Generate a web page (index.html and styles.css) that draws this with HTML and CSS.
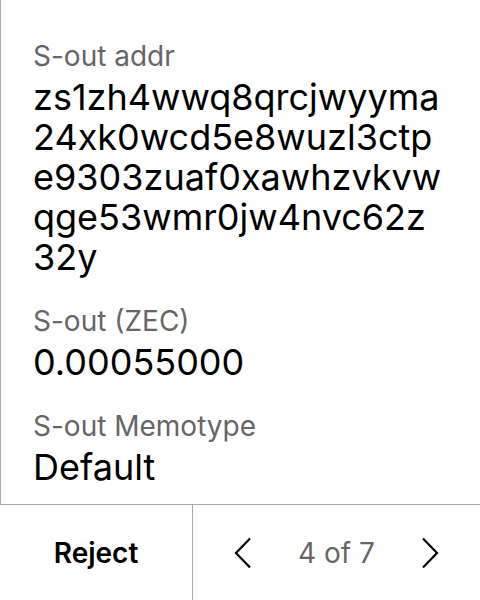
FILE: index.html
```html
<!DOCTYPE html>
<html>
<head>
<meta charset="utf-8">
<link rel="stylesheet" href="styles.css">
</head>
<body>
<div class="screen">
  <div class="content">
    <div class="field">
      <div class="label">S-out addr</div>
      <div class="value">zs1zh4wwq8qrcjwyyma<br>24xk0wcd5e8wuzl3ctp<br>e9303zuaf0xawhzvkvw<br>qge53wmr0jw4nvc62z<br>32y</div>
    </div>
    <div class="field">
      <div class="label">S-out (ZEC)</div>
      <div class="value">0.00055000</div>
    </div>
    <div class="field">
      <div class="label">S-out Memotype</div>
      <div class="value">Default</div>
    </div>
  </div>
  <div class="footer">
    <div class="reject">Reject</div>
    <div class="nav">
      <svg class="chev" width="18" height="32" viewBox="0 0 18 32"><path d="M16 1.5 L2 16 L16 30.5" fill="none" stroke="#000" stroke-width="2.2"/></svg>
      <span class="page">4 of 7</span>
      <svg class="chev" width="18" height="32" viewBox="0 0 18 32"><path d="M2 1.5 L16 16 L2 30.5" fill="none" stroke="#000" stroke-width="2.2"/></svg>
    </div>
  </div>
</div>
</body>
</html>
```
FILE: styles.css
```css
html, body {
  margin: 0;
  padding: 0;
  background: #fff;
}
.screen {
  width: 480px;
  height: 600px;
  display: flex;
  flex-direction: column;
  font-family: Inter, "Noto Sans", sans-serif;
  color: #000;
}
.content {
  flex: 1;
  border-left: 1px solid #a8a8a8;
  padding: 40px 16px 0 32px;
  display: flex;
  flex-direction: column;
  gap: 28px;
}
.field {
  display: flex;
  flex-direction: column;
  gap: 5px;
}
.label {
  font-size: 28px;
  line-height: 32px;
  color: #666666;
}
.value {
  font-size: 36px;
  line-height: 40px;
  color: #000;
}
.footer {
  height: 95px;
  border-top: 1px solid #a8a8a8;
  display: flex;
}
.reject {
  width: 192px;
  border-right: 1px solid #a8a8a8;
  display: flex;
  align-items: center;
  justify-content: center;
  font-size: 28px;
  font-weight: 600;
}
.nav {
  flex: 1;
  display: flex;
  align-items: center;
  justify-content: space-between;
  padding: 0 41px 0 41px;
}
.page {
  font-size: 28px;
  color: #666666;
}
.chev {
  display: block;
}
```
